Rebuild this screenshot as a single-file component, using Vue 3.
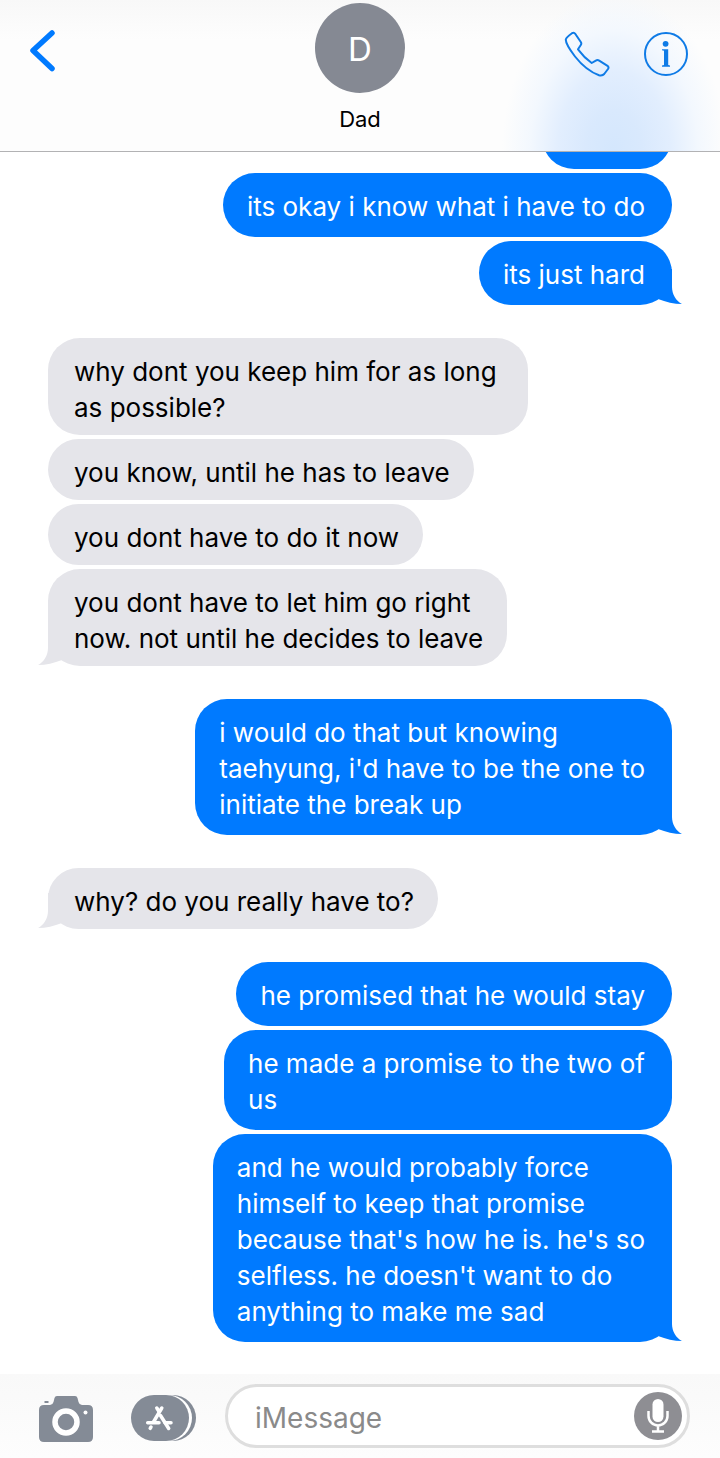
<script setup>
import { ref } from 'vue'

const draft = ref('')

const groups = [
  {
    from: 'me',
    messages: ['its okay i know what i have to do', 'its just hard']
  },
  {
    from: 'them',
    messages: [
      'why dont you keep him for as long \nas possible?',
      'you know, until he has to leave',
      'you dont have to do it now',
      'you dont have to let him go right \nnow. not until he decides to leave'
    ]
  },
  {
    from: 'me',
    messages: ["i would do that but knowing\ntaehyung, i'd have to be the one to\ninitiate the break up"]
  },
  {
    from: 'them',
    messages: ['why? do you really have to?']
  },
  {
    from: 'me',
    messages: [
      'he promised that he would stay',
      'he made a promise to the two of\nus',
      "and he would probably force\nhimself to keep that promise\nbecause that's how he is. he's so\nselfless. he doesn't want to do\nanything to make me sad"
    ]
  }
]
</script>

<template>
  <div class="chat">
    <header class="header">
      <button class="icon-btn back" type="button" aria-label="Back">
        <svg width="28" height="44" viewBox="0 0 28 44">
          <path d="M22 4 L3 21.5 L22 39.5" />
        </svg>
      </button>
      <div class="contact">
        <div class="avatar">D</div>
        <div class="name">Dad</div>
      </div>
      <div class="actions">
        <button class="icon-btn" type="button" aria-label="Call">
          <svg class="line-icon" width="46" height="46" viewBox="0 0 46 46">
            <path d="M8 2.2 Q10 1 11.2 2.8 L16.8 11 Q17.8 12.5 16.8 14 L14 18.3 Q20 26.5 27.7 32 L31.8 29.6 Q33.5 28.6 35.2 29.6 L43.5 34.8 Q45.2 36.2 44 38 L40.2 43 Q38.5 45 35 44.2 Q22 39.5 11 25.5 Q1.5 13 1.8 8.5 Q2.5 6 8 2.2 Z" />
          </svg>
        </button>
        <button class="icon-btn" type="button" aria-label="Info">
          <svg class="line-icon" width="44" height="44" viewBox="0 0 44 44">
            <circle cx="22" cy="22" r="21" />
            <circle class="solid" cx="21.6" cy="11.8" r="2.9" />
            <path class="solid" d="M18 17.2 H24.2 V33 L26 33.6 V34.8 H18 V33.6 L20 33 V18.8 L18 18.2 Z" />
          </svg>
        </button>
      </div>
    </header>

    <main class="thread">
      <div v-for="(group, i) in groups" :key="i" class="group" :class="group.from">
        <div v-if="i === 0" class="bubble clipped"></div>
        <div v-for="text in group.messages" :key="text" class="bubble">
          <span class="text">{{ text }}</span>
          <svg class="tail" width="42" height="36" viewBox="0 0 42 36">
            <path d="M18 0 H32 V18 C32 25 36 32 42 35 C34 35 26 33 18 30 Z" />
          </svg>
        </div>
      </div>
    </main>

    <footer class="composer">
      <button class="icon-btn camera" type="button" aria-label="Camera">
        <svg width="54" height="46" viewBox="0 0 54 46">
          <path class="gray" d="M5.5 5 H9.5 V7 H5.5 Z" />
          <path class="gray" d="M5 9 H11 Q14 8.5 14.5 6 L15.5 2 Q16 0 18 0 H36 Q38 0 38.5 2 L39.5 6 Q40 8.5 43 9 H49 Q54 9 54 14 V41 Q54 46 49 46 H5 Q0 46 0 41 V14 Q0 9 5 9 Z" />
          <circle class="ring" cx="27" cy="26" r="11" />
          <circle class="white" cx="46.5" cy="16.5" r="2" />
        </svg>
      </button>
      <button class="icon-btn apps" type="button" aria-label="Apps">
        <svg width="65" height="46" viewBox="0 0 65 46">
          <rect class="gray" x="8" width="57" height="46" rx="23" />
          <rect class="white" x="3" width="58" height="46" rx="23" />
          <rect class="gray" width="58" height="46" rx="23" />
          <g class="glyph">
            <path d="M16.7 27.7 H28 M34 27.7 H40" />
            <path d="M30.8 13 L22.5 27" />
            <path d="M25.8 13 L28 16.5 M29.5 20.5 L37.7 33.5" />
            <path d="M20 32 L19.2 33.3" />
          </g>
        </svg>
      </button>
      <div class="field">
        <input v-model="draft" type="text" placeholder="iMessage" aria-label="iMessage" />
        <button class="icon-btn" type="button" aria-label="Dictate">
          <svg width="48" height="48" viewBox="0 0 48 48">
            <circle cx="24" cy="24" r="24" fill="#8e8e93" />
            <rect class="white" x="18.5" y="7" width="11" height="23" rx="5.5" />
            <path class="mic" d="M14.5 19 V24 A9.5 9.5 0 0 0 33.5 24 V19 M24 34 V39 M18 39.5 H30" />
          </svg>
        </button>
      </div>
    </footer>
  </div>
</template>

<style>
body {
  background: #fff;
}
</style>

<style scoped>
.chat {
  display: flex;
  flex-direction: column;
  min-height: 100vh;
  font-family: Inter, "Liberation Sans", sans-serif;
  color: #000;
}
.icon-btn {
  display: flex;
  padding: 0;
  border: 0;
  background: none;
  cursor: pointer;
}
.header {
  display: grid;
  grid-template-columns: 1fr auto 1fr;
  align-items: start;
  padding: 3px 32px 18px;
  border-bottom: 1px solid #b2b2b4;
  background:
    radial-gradient(ellipse 112px 160px at calc(100% - 106px) 100%, #d4e7fd 0%, #d9e9fd 25%, #e2eefe 50%, #f3f8fe 75%, rgba(253, 253, 253, 0) 100%),
    linear-gradient(#f8f8f8, #fdfdfd 40px);
}
.back {
  justify-self: start;
  margin: 26px 0 0 -2px;
}
.back path {
  fill: none;
  stroke: #007aff;
  stroke-width: 5.5;
  stroke-linecap: round;
  stroke-linejoin: round;
}
.contact {
  display: flex;
  flex-direction: column;
  align-items: center;
  gap: 12px;
}
.avatar {
  width: 90px;
  padding-top: 3px;
  border-radius: 50%;
  background: #858993;
  color: #fff;
  font-size: 33px;
  line-height: 87px;
  text-align: center;
}
.name {
  font-size: 22px;
  line-height: 28px;
}
.actions {
  display: flex;
  align-items: center;
  gap: 34px;
  justify-self: end;
  margin-top: 28px;
}
.line-icon {
  fill: none;
  stroke: #0f7be6;
  stroke-width: 2;
  stroke-linejoin: round;
}
.solid {
  fill: #0f7be6;
  stroke: none;
}
.thread {
  display: flex;
  flex: 1;
  flex-direction: column;
  gap: 33px;
  padding: 0 48px 32px;
  overflow: hidden;
}
.group {
  display: flex;
  flex-direction: column;
  align-items: flex-start;
  gap: 4px;
}
.bubble {
  position: relative;
  padding: 16px 24px 9px 26px;
  border-radius: 32px;
  background: #e5e5ea;
  font-size: 26px;
  line-height: 36px;
}
.text {
  white-space: break-spaces;
}
.me {
  align-items: flex-end;
}
.me .bubble {
  padding: 16px 27px 12px 24px;
  background: #007aff;
  color: #fff;
}
/* last bubble of the previous run, mostly scrolled under the header */
.bubble.clipped {
  width: 79px;
  height: 36px;
  margin-top: -47px;
}
.tail {
  display: none;
  position: absolute;
  bottom: 0;
  left: -10px;
  fill: #e5e5ea;
  transform: scaleX(-1);
}
.me .tail {
  right: -10px;
  left: auto;
  fill: #007aff;
  transform: none;
}
.bubble:last-child .tail {
  display: block;
}
.composer {
  display: flex;
  align-items: center;
  padding: 10px 30px 10px 39px;
  background: linear-gradient(#f9f9f9, #fdfdfd);
}
.camera {
  margin-right: 38px;
  padding-top: 5px;
}
.apps {
  margin-right: 29px;
  padding-top: 4px;
}
.gray {
  fill: #848b96;
}
.white {
  fill: #fff;
}
.ring {
  fill: none;
  stroke: #fff;
  stroke-width: 5.5;
}
.glyph,
.mic {
  fill: none;
  stroke: #fff;
  stroke-width: 3.5;
  stroke-linecap: round;
}
.mic {
  stroke-width: 2.5;
  stroke-linecap: butt;
}
.field {
  display: flex;
  flex: 1;
  align-items: center;
  min-width: 0;
  padding: 5px 5px 5px 27px;
  border: 3px solid #dedede;
  border-radius: 32px;
  background: #fff;
}
.field input {
  flex: 1;
  min-width: 0;
  padding: 4px 0 0;
  border: 0;
  outline: 0;
  background: none;
  color: #000;
  font-family: inherit;
  font-size: 28px;
}
.field input::placeholder {
  color: #8a8a8a;
  opacity: 1;
}
</style>
